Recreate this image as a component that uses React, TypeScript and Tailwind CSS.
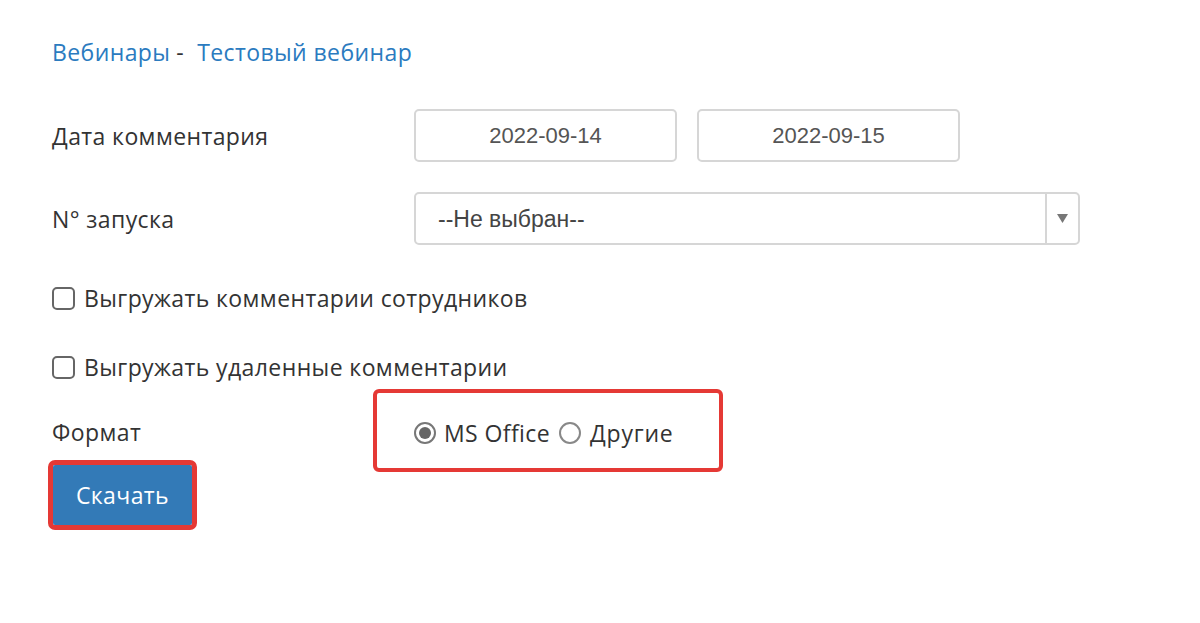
export default function App() {
  const sans = { fontFamily: '"Open Sans", "Noto Sans", sans-serif' }
  const helv = { fontFamily: '"Liberation Sans", Arial, sans-serif' }

  return (
    <div className="min-h-[623px] bg-white text-[#333] pl-[52px] pt-[37px] text-[23px] leading-[30px] tracking-[0.4px]" style={sans}>
      <div>
        <a className="text-[#2b7bbf]">Вебинары</a>
        <span className="ml-[6px] mr-[13px]">-</span>
        <a className="text-[#2b7bbf]">Тестовый вебинар</a>
      </div>

      <div className="mt-[42px] flex items-center">
        <div className="w-[362px]">Дата комментария</div>
        <div className="flex gap-[20px] tracking-normal" style={helv}>
          <div className="flex h-[53px] w-[263px] items-center justify-center rounded-[5px] border-2 border-[#d6d6d6] text-[22px] text-[#555]">
            2022-09-14
          </div>
          <div className="flex h-[53px] w-[263px] items-center justify-center rounded-[5px] border-2 border-[#d6d6d6] text-[22px] text-[#555]">
            2022-09-15
          </div>
        </div>
      </div>

      <div className="mt-[30px] flex items-center">
        <div className="w-[362px]">N° запуска</div>
        <div className="flex h-[53px] w-[666px] items-stretch rounded-[5px] border-2 border-[#d6d6d6]">
          <div className="flex flex-1 items-center pl-[22px] text-[23px] tracking-normal text-[#444]" style={helv}>
            --Не выбран--
          </div>
          <div className="flex w-[33px] items-center justify-center border-l-2 border-[#d6d6d6]">
            <svg width="11" height="9" viewBox="0 0 11 9">
              <path d="M0 0h11L5.5 9z" fill="#777" />
            </svg>
          </div>
        </div>
      </div>

      <label className="mt-[38px] flex items-center gap-[9px]">
        <span className="h-[23px] w-[23px] rounded-[5px] border-2 border-[#666] bg-white" />
        Выгружать комментарии сотрудников
      </label>

      <label className="mt-[39px] flex items-center gap-[9px]">
        <span className="h-[23px] w-[23px] rounded-[5px] border-2 border-[#666] bg-white" />
        Выгружать удаленные комментарии
      </label>

      <div className="mt-[7px] flex items-center">
        <div className="w-[321px] pt-[3px]">Формат</div>
        <div className="flex h-[83px] w-[350px] items-center rounded-[6px] border-[4px] border-[#e53935] pl-[37px] pt-[4px]">
          <span className="flex h-[22px] w-[22px] items-center justify-center rounded-full border-2 border-[#777]">
            <span className="h-[12px] w-[12px] rounded-full bg-[#666]" />
          </span>
          <span className="ml-[8px] mr-[9px]">MS Office</span>
          <span className="h-[22px] w-[22px] rounded-full border-2 border-[#888]" />
          <span className="ml-[9px] tracking-[0.8px]">Другие</span>
        </div>
      </div>

      <div className="-ml-[4px] -mt-[12px] inline-flex rounded-[7px] border-[5px] border-[#e53935]">
        <button className="flex h-[60px] w-[139px] items-center justify-center rounded-[2px] bg-[#337ab7] text-white">
          Скачать
        </button>
      </div>
    </div>
  )
}
